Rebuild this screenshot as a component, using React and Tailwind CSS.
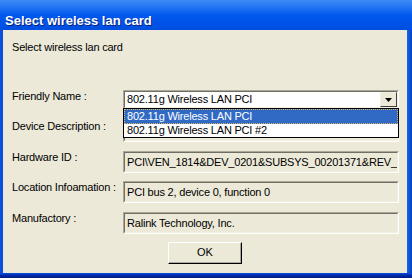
import React from 'react'

const FONT = { fontFamily: "'Liberation Sans', Arial, sans-serif" }

function Sunken({ children, white = false, className = '' }) {
  return (
    <div
      className={`border-t border-l border-b border-r border-t-[#aca899] border-l-[#aca899] border-b-white border-r-white ${className}`}
    >
      <div
        className={`h-full border-t border-l border-b border-r border-t-[#716f64] border-l-[#716f64] border-b-[#f1efe2] border-r-[#f1efe2] ${
          white ? 'bg-white' : 'bg-[#ece9d8]'
        }`}
      >
        {children}
      </div>
    </div>
  )
}

function ReadOnlyField({ value }) {
  return (
    <Sunken className="h-[22px] w-full">
      <div className="flex h-full items-center overflow-hidden whitespace-nowrap pl-[2px] text-[11px] leading-[13px] tracking-[-0.2px] text-black">
        {value}
      </div>
    </Sunken>
  )
}

function Row({ label, children, className = '' }) {
  return (
    <div className={`flex items-start ${className}`}>
      <div className="w-[111px] shrink-0 text-[11px] leading-[13px] tracking-[-0.2px] text-black">{label}</div>
      <div className="relative flex-1">{children}</div>
    </div>
  )
}

function Combo() {
  return (
    <div className="relative">
      <Sunken white className="h-[19px] w-full">
        <div className="flex h-full items-center justify-between">
          <span className="pl-[2px] text-[11px] leading-[13px] tracking-[-0.2px] text-black">802.11g Wireless LAN PCI</span>
          <div className="flex h-full w-[17px] items-center justify-center border-t border-l border-b border-r border-t-[#f1efe2] border-l-[#f1efe2] border-b-[#404040] border-r-[#404040] bg-[#ece9d8]">
            <svg width="7" height="4" viewBox="0 0 7 4" aria-hidden="true">
              <path d="M0 0h7L3.5 4z" fill="#000" />
            </svg>
          </div>
        </div>
      </Sunken>
      <div className="absolute left-0 top-[18px] z-10 w-full border border-black bg-white text-[11px] leading-[13px] tracking-[-0.2px]">
        <div className="border border-dotted border-[#d9b36a] bg-[#316ac5] pl-[2px] text-white">802.11g Wireless LAN PCI</div>
        <div className="pl-[3px] text-black">802.11g Wireless LAN PCI #2</div>
      </div>
    </div>
  )
}

export default function App() {
  return (
    <div className="flex h-[278px] w-[412px] flex-col overflow-hidden bg-[#0a4fdc]" style={FONT}>
      <div className="h-[30px] shrink-0 bg-gradient-to-b from-[#3d8cf5] via-[#0058ee] to-[#004ee0] pl-[5px] pt-[8px]">
        <span className="text-[13px] font-bold leading-[15px] text-white [text-shadow:1px_1px_0_#0a1f7a]">
          Select wireless lan card
        </span>
      </div>
      <div className="flex min-h-0 flex-1 overflow-hidden pl-[3px]">
        <div className="flex flex-1 flex-col bg-[#ece9d8] pl-[9px] pr-[8px] pt-[11px]">
          <div className="text-[11px] leading-[13px] tracking-[-0.2px] text-black">Select wireless lan card</div>
          <Row label="Friendly Name :" className="mt-[36px]">
            <Combo />
          </Row>
          <Row label="Device Description :" className="mt-[11px]">
            <ReadOnlyField value="" />
          </Row>
          <Row label="Hardware ID :" className="mt-[9px]">
            <ReadOnlyField value="PCI\VEN_1814&DEV_0201&SUBSYS_00201371&REV_" />
          </Row>
          <Row label="Location Infoamation :" className="mt-[8px]">
            <ReadOnlyField value="PCI bus 2, device 0, function 0" />
          </Row>
          <Row label="Manufactory :" className="mt-[9px]">
            <ReadOnlyField value="Ralink Technology, Inc." />
          </Row>
          <div className="mt-[8px] flex justify-center">
            <button
              type="button"
              className="h-[22px] w-[74px] border-t border-l border-b border-r border-t-white border-l-white border-b-black border-r-black bg-[#ece9d8] p-0"
            >
              <div className="flex h-full items-center justify-center border-b border-r border-b-[#aca899] border-r-[#aca899] text-[11px] leading-[13px] text-black">
                OK
              </div>
            </button>
          </div>
        </div>
        <div className="w-[6px] shrink-0 bg-gradient-to-r from-[#1a62ec] to-[#0037c0]" />
      </div>
      <div className="h-[5px] shrink-0 bg-gradient-to-b from-[#0a4fdc] via-[#0028a8] to-[#001a80]" />
    </div>
  )
}
